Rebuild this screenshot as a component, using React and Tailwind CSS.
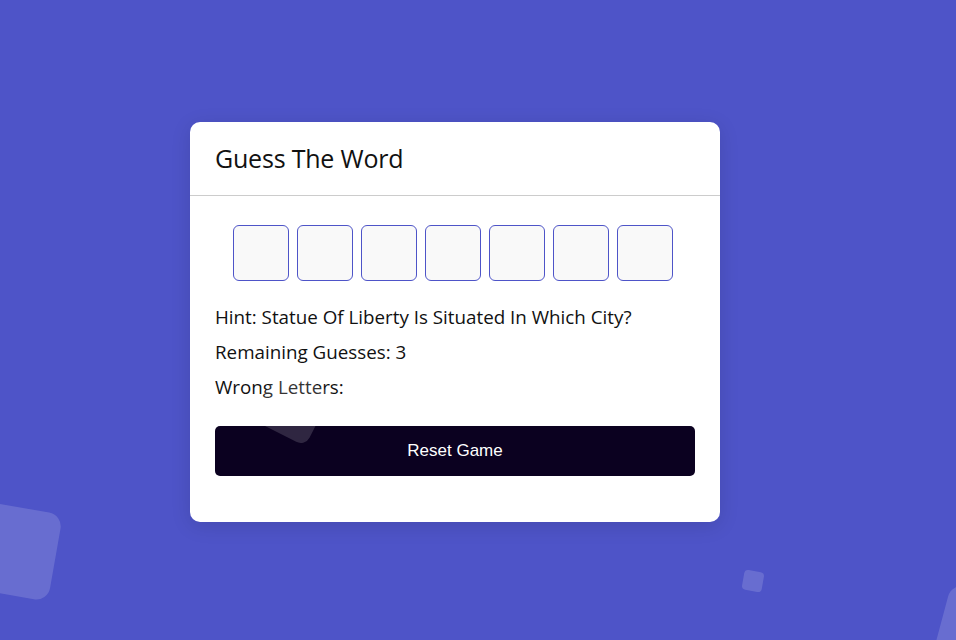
import React from "react";

const letters = ["", "", "", "", "", "", ""];

export default function App() {
  return (
    <div className="relative min-h-screen w-full overflow-hidden bg-[#4e54c8] flex items-center justify-center pr-[46px] pt-[4px] font-['Open_Sans',sans-serif]">
      {/* floating squares */}
      <div className="absolute left-[-40px] top-[506px] h-[88px] w-[96px] rotate-[10deg] rounded-[14px] bg-white/15" />
      <div className="absolute left-[743px] top-[571px] h-[20px] w-[20px] rotate-[10deg] rounded-[4px] bg-white/15" />
      <div className="absolute left-[940px] top-[592px] h-[80px] w-[80px] rotate-[15deg] rounded-[14px] bg-white/15" />

      <div className="relative w-[530px] rounded-[10px] bg-white shadow-[0_4px_20px_rgba(0,0,0,0.12)]">
        <div className="flex h-[74px] items-center border-b border-[#cccccc] px-[25px]">
          <h1 className="text-[25px] text-[#111] tracking-[-0.2px]">Guess The Word</h1>
        </div>

        <div className="px-[25px] pt-[29px] pb-[46px]">
          <div className="flex justify-center gap-[8px] pr-[4px]">
            {letters.map((l, i) => (
              <input
                key={i}
                readOnly
                value={l}
                className="h-[56px] w-[56px] rounded-[6px] border border-[#4e54c8] bg-[#f9f9f9] text-center text-2xl outline-none"
              />
            ))}
          </div>

          <div className="mt-[19px] text-[18.8px] leading-[35px] text-[#111]">
            <p>Hint: Statue Of Liberty Is Situated In Which City?</p>
            <p>Remaining Guesses: 3</p>
            <p>Wrong Letters:</p>
          </div>

          <button className="mt-[21px] h-[50px] w-full rounded-[5px] bg-[#0b0120] text-[17px] text-white font-['Liberation_Sans',Arial,sans-serif]">
            Reset Game
          </button>
        </div>

        <div className="pointer-events-none absolute left-[72px] top-[254px] h-[60px] w-[60px] rotate-[27deg] rounded-[10px] bg-white/15" />
      </div>
    </div>
  );
}
